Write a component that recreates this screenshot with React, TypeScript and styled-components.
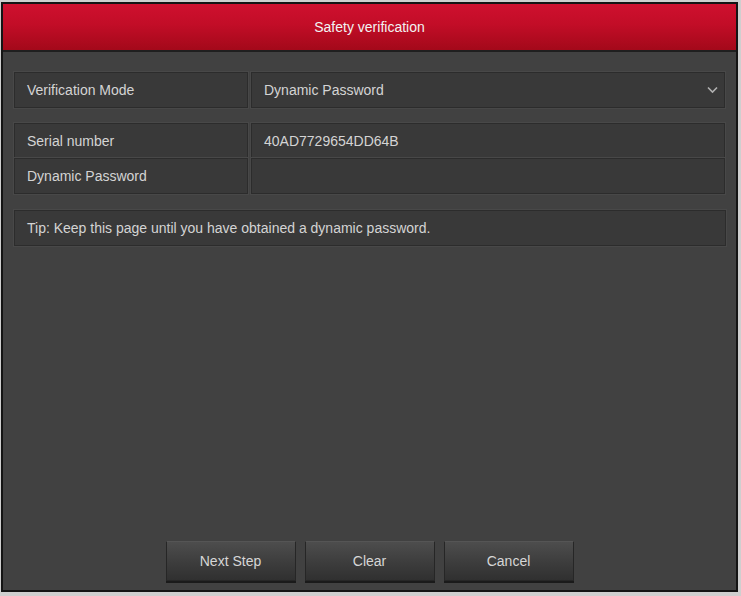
import React from "react";
import styled, { createGlobalStyle } from "styled-components";

const Global = createGlobalStyle`
  html, body { margin: 0; padding: 0; background: #cfcfcf; }
  body { font-family: "Liberation Sans", Arial, sans-serif; }
  * { box-sizing: border-box; }
`;

const Page = styled.div`
  padding: 2px 3px 4px 1px;
  width: 741px;
  height: 596px;
`;

const Panel = styled.div`
  height: 590px;
  border: 2px solid #141414;
  background: #414141;
  display: flex;
  flex-direction: column;
`;

const Header = styled.div`
  height: 48px;
  flex: none;
  background: linear-gradient(to bottom, #cf102f 0%, #c20d27 45%, #a3091a 100%);
  border-bottom: 2px solid #1f1f1f;
  display: flex;
  align-items: center;
  justify-content: center;
  color: #f2f2f2;
  font-size: 14px;
`;

const Body = styled.div`
  flex: 1;
  display: flex;
  flex-direction: column;
  padding: 20px 11px 9px 11px;
`;

const Grid = styled.div<{ $mt?: number }>`
  display: grid;
  grid-template-columns: 234px 1fr;
  column-gap: 3px;
  margin-top: ${(p) => p.$mt ?? 0}px;
`;

const Cell = styled.div<{ $h?: number }>`
  height: ${(p) => p.$h ?? 36}px;
  background: #393939;
  border: 1px solid #2c2c2c;
  outline: 1px solid #484848;
  outline-offset: 0;
  display: flex;
  align-items: center;
  padding: 0 12px;
  color: #d4d4d4;
  font-size: 14px;
  position: relative;
`;

const Tip = styled(Cell)`
  margin-top: 16px;
  margin-right: -1px;
`;

const Chevron = styled.svg`
  position: absolute;
  right: 6px;
  top: 50%;
  transform: translateY(-50%);
`;

const Spacer = styled.div`
  flex: 1;
`;

const Buttons = styled.div`
  display: flex;
  justify-content: center;
  gap: 9px;
`;

const Button = styled.button`
  width: 130px;
  height: 40px;
  border: 1px solid #262626;
  border-top-color: #555;
  background: linear-gradient(to bottom, #4d4d4d 0%, #3e3e3e 50%, #303030 100%);
  color: #d6d6d6;
  font-family: "Liberation Sans", Arial, sans-serif;
  font-size: 14px;
  box-shadow: 0 2px 0 #1a1a1a;
  cursor: pointer;
`;

export default function App() {
  return (
    <Page>
      <Global />
      <Panel>
        <Header>Safety verification</Header>
        <Body>
          <Grid>
            <Cell>Verification Mode</Cell>
            <Cell>
              Dynamic Password
              <Chevron width="11" height="7" viewBox="0 0 11 7">
                <path d="M1 1 L5.5 5.5 L10 1" stroke="#b0b0b0" strokeWidth="1.6" fill="none" />
              </Chevron>
            </Cell>
          </Grid>
          <Grid $mt={15}>
            <Cell $h={35}>Serial number</Cell>
            <Cell $h={35}>40AD7729654DD64B</Cell>
            <Cell $h={36}>Dynamic Password</Cell>
            <Cell $h={36}></Cell>
          </Grid>
          <Tip>Tip: Keep this page until you have obtained a dynamic password.</Tip>
          <Spacer />
          <Buttons>
            <Button>Next Step</Button>
            <Button>Clear</Button>
            <Button>Cancel</Button>
          </Buttons>
        </Body>
      </Panel>
    </Page>
  );
}
